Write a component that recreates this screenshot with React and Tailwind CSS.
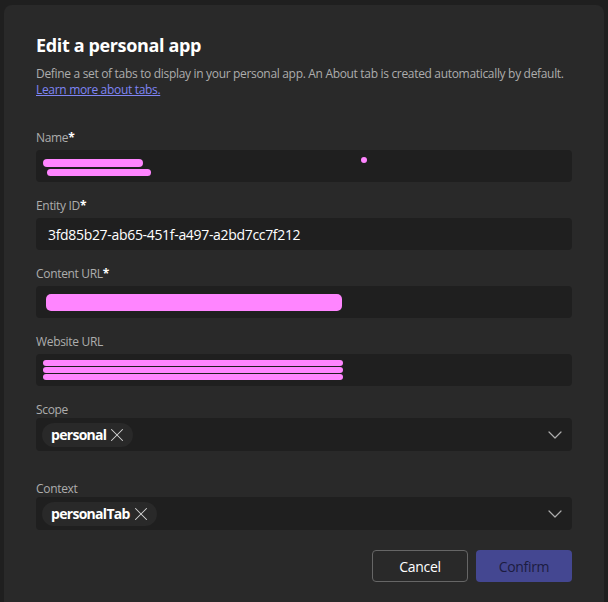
import { ChevronDown, X } from 'lucide-react';

const Label = ({ children, required, tight }) => (
  <label className={`block text-[12px] leading-[16px] text-[#adadad] ${tight ? 'mb-0' : 'mb-[4px]'}`}>
    {children}
    {required && <span className="text-white font-bold">*</span>}
  </label>
);

const Chip = ({ text }) => (
  <span className="inline-flex items-center h-[24px] pl-[9px] pr-[5px] rounded-full bg-[#292929] text-white text-[14px] font-bold tracking-[-0.05em]">
    {text}
    <X className="w-[22px] h-[22px] text-[#d6d6d6]" strokeWidth={1.1} />
  </span>
);

const App = () => {
  return (
    <div className="h-[602px] overflow-hidden bg-[#1f1f1f] pt-[5px] px-[4px]" style={{ fontFamily: '"Open Sans", "Noto Sans", sans-serif' }}>
      <div className="bg-[#292929] rounded-t-[8px] h-[700px] px-[32px] pt-[26px] tracking-[-0.02em]">
        <h1 className="text-[18px] leading-[28px] font-bold text-white tracking-[-0.02em]">Edit a personal app</h1>
        <p className="mt-[7px] text-[12px] leading-[16px] text-[#adadad]">
          Define a set of tabs to display in your personal app. An About tab is created automatically by default.{' '}
          <a className="text-[#7f85f5] underline">Learn more about tabs.</a>
        </p>

        <div className="mt-[32px]">
          <Label required>Name</Label>
          <div className="relative h-[32px] rounded-[4px] bg-[#1f1f1f]">
            <div className="absolute left-[7px] top-[9px] w-[100px] h-[8px] rounded-full bg-[#ff85ff]" />
            <div className="absolute left-[11px] top-[19px] w-[104px] h-[7px] rounded-full bg-[#ff85ff]" />
            <div className="absolute left-[325px] top-[7px] w-[6px] h-[6px] rounded-full bg-[#ff85ff]" />
          </div>
        </div>

        <div className="mt-[16px]">
          <Label required>Entity ID</Label>
          <div className="h-[32px] rounded-[4px] bg-[#1f1f1f] flex items-center px-[12px] text-[14px] text-white">
            3fd85b27-ab65-451f-a497-a2bd7cc7f212
          </div>
        </div>

        <div className="mt-[16px]">
          <Label required>Content URL</Label>
          <div className="h-[32px] rounded-[4px] bg-[#1f1f1f] flex items-center px-[10px]">
            <div className="w-[296px] h-[17px] rounded-[5px] bg-[#ff85ff]" />
          </div>
        </div>

        <div className="mt-[16px]">
          <Label>Website URL</Label>
          <div className="h-[32px] rounded-[4px] bg-[#1f1f1f] flex flex-col justify-center gap-[1px] px-[7px]">
            <div className="w-[300px] h-[6px] rounded-full bg-[#ff85ff]" />
            <div className="w-[300px] h-[6px] rounded-full bg-[#ff85ff]" />
            <div className="w-[300px] h-[6px] rounded-full bg-[#ff85ff]" />
          </div>
        </div>

        <div className="mt-[16px]">
          <Label tight>Scope</Label>
          <div className="h-[33px] rounded-[4px] bg-[#1f1f1f] flex items-center justify-between pl-[6px] pr-[5px]">
            <Chip text="personal" />
            <ChevronDown className="w-[24px] h-[24px] text-[#adadad]" strokeWidth={1.2} />
          </div>
        </div>

        <div className="mt-[30px]">
          <Label tight>Context</Label>
          <div className="h-[33px] rounded-[4px] bg-[#1f1f1f] flex items-center justify-between pl-[6px] pr-[5px]">
            <Chip text="personalTab" />
            <ChevronDown className="w-[24px] h-[24px] text-[#adadad]" strokeWidth={1.2} />
          </div>
        </div>

        <div className="mt-[20px] flex justify-end gap-[8px]">
          <button className="w-[96px] h-[32px] rounded-[4px] border border-[#666666] bg-[#292929] text-white text-[14px] font-medium">Cancel</button>
          <button className="w-[96px] h-[32px] rounded-[4px] bg-[#444791] text-[#1c1c40] text-[14px] font-medium">Confirm</button>
        </div>
      </div>
    </div>
  );
};

export default App;
